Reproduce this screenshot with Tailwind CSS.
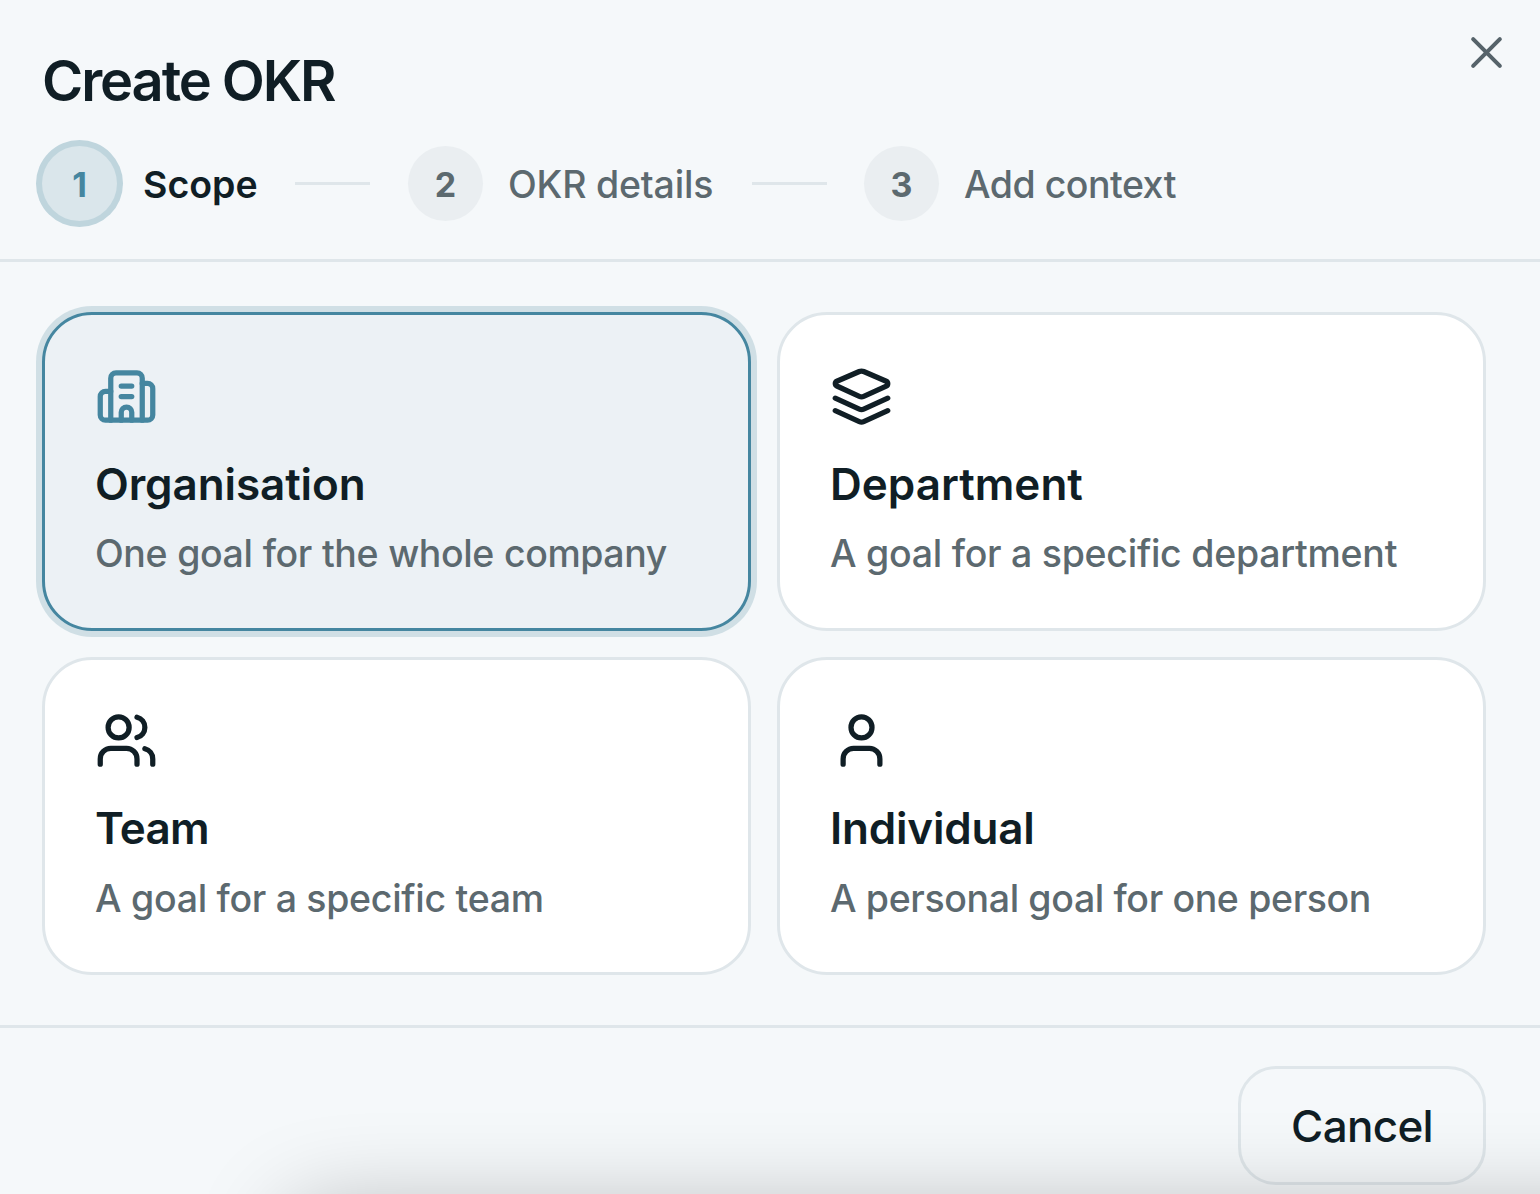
<!DOCTYPE html>
<html lang="en">
<head>
    <meta charset="UTF-8">
    <meta name="viewport" content="width=device-width, initial-scale=1.0">
    <title>Create OKR</title>
    <script src="https://cdn.jsdelivr.net/npm/@tailwindcss/browser@4"></script>
</head>
<body class="bg-[#f5f8fa] font-['Inter',sans-serif] text-[#101e25] antialiased">

    <div class="relative w-[1540px] h-[1194px] overflow-hidden flex flex-col">

        <!-- Header -->
        <header class="relative h-[262px] shrink-0 border-b-3 border-[#dfe6ea] pl-[42px] pt-[46px]">
            <h1 class="text-[56px] leading-[70px] font-semibold tracking-[-2.1px] whitespace-nowrap">Create OKR</h1>

            <button class="absolute right-[34px] top-[33px] text-[#56636a]" aria-label="Close">
                <svg class="w-[39px] h-[39px]" viewBox="0 0 24 24" fill="none" stroke="currentColor" stroke-width="2.5" stroke-linecap="round"><path d="M3.8 3.8l16.4 16.4M20.2 3.8L3.8 20.2"/></svg>
            </button>

            <div class="flex items-center mt-[30px] h-[75px] text-[37.5px] whitespace-nowrap">
                <div class="flex items-center w-[253px]">
                    <span class="w-[75px] h-[75px] shrink-0 rounded-full bg-[#dae6eb] ring-6 ring-[#bfd5dd] flex items-center justify-center pt-[2px] text-[34px] font-bold text-[#4586a0]">1</span>
                    <span class="ml-[26px] pt-[4px] font-semibold tracking-[0px]">Scope</span>
                </div>
                <span class="w-[75px] h-[3px] bg-[#dfe6ea]"></span>
                <div class="flex items-center w-[344px] ml-[38px]">
                    <span class="w-[75px] h-[75px] shrink-0 rounded-full bg-[#eaeef1] flex items-center justify-center pt-[2px] text-[34px] font-bold text-[#5c696f]">2</span>
                    <span class="ml-[25px] pt-[4px] font-[450] text-[#5c696f] tracking-[-0.2px]">OKR details</span>
                </div>
                <span class="w-[75px] h-[3px] bg-[#dfe6ea]"></span>
                <div class="flex items-center ml-[37px]">
                    <span class="w-[75px] h-[75px] shrink-0 rounded-full bg-[#eaeef1] flex items-center justify-center pt-[2px] text-[34px] font-bold text-[#5c696f]">3</span>
                    <span class="ml-[25px] pt-[4px] font-[450] text-[#5c696f] tracking-[-0.5px]">Add context</span>
                </div>
            </div>
        </header>

        <!-- Scope options -->
        <main class="h-[763px] shrink-0 grid grid-cols-[709px_709px] auto-rows-[318.5px] gap-x-[26px] gap-y-[26px] pl-[42px] pt-[50px] whitespace-nowrap">
            <div class="rounded-[50px] border-3 border-[#4586a0] bg-[#ecf1f5] ring-6 ring-[#d0dfe5] pl-[50px] pt-[50px]">
                <svg class="w-[63px] h-[63px] text-[#4586a0]" viewBox="0 0 24 24" fill="none" stroke="currentColor" stroke-width="2" stroke-linecap="round" stroke-linejoin="round"><path d="M10 12h4"/><path d="M10 8h4"/><path d="M14 21v-3a2 2 0 0 0-4 0v3"/><path d="M6 10H4a2 2 0 0 0-2 2v7a2 2 0 0 0 2 2h16a2 2 0 0 0 2-2V9a2 2 0 0 0-2-2h-2"/><path d="M6 21V5a2 2 0 0 1 2-2h8a2 2 0 0 1 2 2v16"/></svg>
                <h2 class="mt-[25px] text-[44px] leading-[63px] font-semibold tracking-[-0.1px]">Organisation</h2>
                <p class="mt-[13px] text-[37.5px] leading-[50px] font-[450] text-[#5c696f] tracking-[-0.45px] [word-spacing:0.7px]">One goal for the whole company</p>
            </div>
            <div class="rounded-[50px] border-3 border-[#dfe6ea] bg-white pl-[50px] pt-[50px]">
                <svg class="w-[63px] h-[63px]" viewBox="0 0 24 24" fill="none" stroke="currentColor" stroke-width="2" stroke-linecap="round" stroke-linejoin="round"><path d="m12.83 2.48a2 2 0 0 0-1.66 0L2.6 6.18a1 1 0 0 0 0 1.83l8.58 3.91a2 2 0 0 0 1.66 0l8.58-3.9a1 1 0 0 0 0-1.83Z"/><path d="m22 12.65-9.17 4.16a2 2 0 0 1-1.66 0L2 12.65"/><path d="m22 17.4-9.17 4.16a2 2 0 0 1-1.66 0L2 17.4"/></svg>
                <h2 class="mt-[25px] text-[44px] leading-[63px] font-semibold tracking-[0px]">Department</h2>
                <p class="mt-[13px] text-[37.5px] leading-[50px] font-[450] text-[#5c696f] tracking-[-0.27px]">A goal for a specific department</p>
            </div>
            <div class="rounded-[50px] border-3 border-[#dfe6ea] bg-white pl-[50px] pt-[49px]">
                <svg class="w-[63px] h-[63px]" viewBox="0 0 24 24" fill="none" stroke="currentColor" stroke-width="2" stroke-linecap="round" stroke-linejoin="round"><path d="M16 21v-2a4 4 0 0 0-4-4H6a4 4 0 0 0-4 4v2"/><path d="M16 3.128a4 4 0 0 1 0 7.744"/><path d="M22 21v-2a4 4 0 0 0-3-3.87"/><circle cx="9" cy="7" r="4"/></svg>
                <h2 class="mt-[25px] text-[44px] leading-[63px] font-semibold tracking-[-0.8px]">Team</h2>
                <p class="mt-[14px] text-[37.5px] leading-[50px] font-[450] text-[#5c696f] tracking-[-0.3px]">A goal for a specific team</p>
            </div>
            <div class="rounded-[50px] border-3 border-[#dfe6ea] bg-white pl-[50px] pt-[49px]">
                <svg class="w-[63px] h-[63px]" viewBox="0 0 24 24" fill="none" stroke="currentColor" stroke-width="2" stroke-linecap="round" stroke-linejoin="round"><path d="M19 21v-2a4 4 0 0 0-4-4H9a4 4 0 0 0-4 4v2"/><circle cx="12" cy="7" r="4"/></svg>
                <h2 class="mt-[25px] text-[44px] leading-[63px] font-semibold tracking-[-0.2px]">Individual</h2>
                <p class="mt-[14px] text-[37.5px] leading-[50px] font-[450] text-[#5c696f] tracking-[-0.37px]">A personal goal for one person</p>
            </div>
        </main>

        <!-- Footer -->
        <footer class="grow border-t-3 border-[#dfe6ea] flex justify-end items-start pt-[38px] pr-[54px]">
            <button class="w-[248px] h-[119px] rounded-[38px] border-3 border-[#dfe6ea] text-[44px] font-medium tracking-[-0.7px]">Cancel</button>
        </footer>

        <!-- Shadow rising from below the dialog -->
        <div class="absolute left-[285px] top-[1207px] w-[1400px] h-[200px] rounded-[40px] shadow-[0_0_90px_0_rgba(0,0,0,0.25)] pointer-events-none"></div>
    </div>

</body>
</html>
